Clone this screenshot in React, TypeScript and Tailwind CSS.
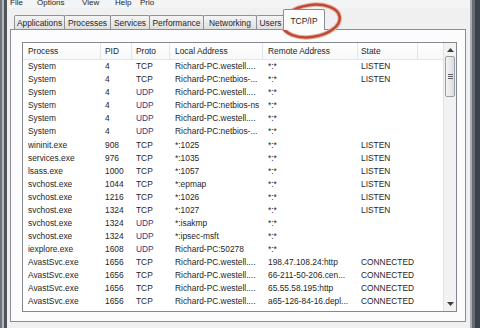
import React from 'react';

type Row = [string, string, string, string, string, string];

const ROWS: Row[] = [
  ['System', '4', 'TCP', 'Richard-PC.westell....', '*:*', 'LISTEN'],
  ['System', '4', 'TCP', 'Richard-PC:netbios-...', '*:*', 'LISTEN'],
  ['System', '4', 'UDP', 'Richard-PC.westell....', '*:*', ''],
  ['System', '4', 'UDP', 'Richard-PC:netbios-ns', '*:*', ''],
  ['System', '4', 'UDP', 'Richard-PC.westell....', '*:*', ''],
  ['System', '4', 'UDP', 'Richard-PC:netbios-...', '*:*', ''],
  ['wininit.exe', '908', 'TCP', '*:1025', '*:*', 'LISTEN'],
  ['services.exe', '976', 'TCP', '*:1035', '*:*', 'LISTEN'],
  ['lsass.exe', '1000', 'TCP', '*:1057', '*:*', 'LISTEN'],
  ['svchost.exe', '1044', 'TCP', '*:epmap', '*:*', 'LISTEN'],
  ['svchost.exe', '1216', 'TCP', '*:1026', '*:*', 'LISTEN'],
  ['svchost.exe', '1324', 'TCP', '*:1027', '*:*', 'LISTEN'],
  ['svchost.exe', '1324', 'UDP', '*:isakmp', '*:*', ''],
  ['svchost.exe', '1324', 'UDP', '*:ipsec-msft', '*:*', ''],
  ['iexplore.exe', '1608', 'UDP', 'Richard-PC:50278', '*:*', ''],
  ['AvastSvc.exe', '1656', 'TCP', 'Richard-PC.westell....', '198.47.108.24:http', 'CONNECTED'],
  ['AvastSvc.exe', '1656', 'TCP', 'Richard-PC.westell....', '66-211-50-206.cen...', 'CONNECTED'],
  ['AvastSvc.exe', '1656', 'TCP', 'Richard-PC.westell....', '65.55.58.195:http', 'CONNECTED'],
  ['AvastSvc.exe', '1656', 'TCP', 'Richard-PC.westell....', 'a65-126-84-16.depl...', 'CONNECTED'],
];

const TABS = [
  { label: 'Applications', w: 'w-[51px]' },
  { label: 'Processes', w: 'w-[47px]' },
  { label: 'Services', w: 'w-[40px]' },
  { label: 'Performance', w: 'w-[55px]' },
  { label: 'Networking', w: 'w-[54px]' },
  { label: 'Users', w: 'w-[29px]' },
];

// column widths: Process, PID, Proto, Local, Remote, State
const COLS = ['w-[78px] pl-[5px]', 'w-[31px] pl-[4px]', 'w-[38px] pl-[4px]', 'w-[93px] pl-[5px]', 'w-[95px] pl-[5px]', 'w-[60px] pl-[3px]'];
const HEADERS = ['Process', 'PID', 'Proto', 'Local Address', 'Remote Address', 'State'];

function ListView() {
  return (
    <div className="flex h-[270px] w-[435px] border border-[#828790] bg-white">
      <div className="flex-1 flex flex-col overflow-hidden">
        {/* column headers */}
        <div className="flex h-[17px] shrink-0 items-center border-b border-[#e3e6ea] bg-gradient-to-b from-white to-[#f7f8f9]">
          {HEADERS.map((h, i) => (
            <div key={h} className={`${COLS[i]} h-full flex items-center border-r border-[#e3e5e8] whitespace-nowrap`}>
              {h}
            </div>
          ))}
          <div className="flex-1" />
        </div>
        {ROWS.map((r, idx) => (
          <div key={idx} className="flex h-[13.05px] shrink-0 items-center whitespace-nowrap">
            {r.map((c, i) => (
              <div
                key={i}
                className={`${COLS[i]} overflow-hidden ${i === 2 && c === 'UDP' ? 'text-[#2d3a86]' : ''}`}
              >
                {c}
              </div>
            ))}
          </div>
        ))}
      </div>
      {/* vertical scrollbar */}
      <div className="w-[13px] flex flex-col bg-[#f2f2f2] border-l border-[#e2e2e2]">
        <div className="h-[13px] flex items-center justify-center">
          <svg width="7" height="4" viewBox="0 0 7 4"><path d="M0 4 L3.5 0 L7 4 Z" fill="#404040" /></svg>
        </div>
        <div className="h-[41px] mx-[1px] rounded-[2px] border border-[#979ea6] bg-gradient-to-r from-[#f4f4f4] to-[#dcdde0] flex flex-col items-center justify-center gap-[1px]">
          <div className="w-[5px] h-px bg-[#5c6066]" />
          <div className="w-[5px] h-px bg-[#5c6066]" />
          <div className="w-[5px] h-px bg-[#5c6066]" />
        </div>
        <div className="flex-1" />
        <div className="h-[14px] flex items-center justify-center">
          <svg width="7" height="4" viewBox="0 0 7 4"><path d="M0 0 L3.5 4 L7 0 Z" fill="#404040" /></svg>
        </div>
      </div>
    </div>
  );
}

export default function App() {
  return (
    <div
      className="relative w-[480px] h-[328px] overflow-hidden flex bg-[#f0f0f0] text-[8.4px] text-[#262626]"
      style={{ fontFamily: '"Liberation Sans", Arial, sans-serif' }}
    >
      {/* left window frame */}
      <div className="flex shrink-0">
        <div className="w-[2px] bg-[#6e7279]" />
        <div className="w-[2px] bg-[#b4b7bc]" />
        <div className="w-[3px] bg-[#4f535b]" />
      </div>

      <div className="w-[463px] flex flex-col">
        {/* menu bar (cut at top in the capture) */}
        <div className="h-[8px] overflow-hidden bg-[#f3f4f6] text-[8px]">
          <div className="flex mt-[-3px] leading-[12px] pl-[3px]">
            <span className="w-[27px]">File</span>
            <span className="w-[45px]">Options</span>
            <span className="w-[33px]">View</span>
            <span className="w-[25px]">Help</span>
            <span>Prio</span>
          </div>
        </div>

        {/* tab strip */}
        <div className="h-[21px] flex items-end pl-[7px] relative z-10">
          {TABS.map((t, i) => (
            <div
              key={t.label}
              className={`${t.w} h-[14px] ${i === 0 ? '' : '-ml-px'} border border-b-0 border-[#8e9196] rounded-t-[2px] bg-gradient-to-b from-[#f4f4f4] to-[#dfdfdf] flex items-center justify-center pt-px whitespace-nowrap`}
            >
              {t.label}
            </div>
          ))}
          <div className="w-[42px] h-[21px] -ml-[2px] mb-[-1px] border border-b-0 border-[#898c95] rounded-t-[2px] bg-[#fcfcfc] flex justify-center pt-[5px] whitespace-nowrap">
            TCP/IP
          </div>
        </div>

        {/* tab panel */}
        <div className="ml-[3px] w-[456px] h-[293px] border border-[#898c95] bg-[#fcfcfc] pt-[12px] pl-[11px]">
          <ListView />
        </div>
      </div>

      {/* right window frame */}
      <div className="flex shrink-0">
        <div className="w-[2px] bg-[#a9acb1]" />
        <div className="w-[3px] bg-[#676b73]" />
        <div className="w-[5px] bg-[#3d4149]" />
      </div>

      {/* red highlight ring drawn over the TCP/IP tab */}
      <svg className="absolute left-0 top-0 pointer-events-none" width="480" height="60">
        <ellipse cx="311" cy="21" rx="29" ry="16" transform="rotate(-8 311 21)" fill="none" stroke="#e7b3a6" strokeWidth="4.5" />
        <ellipse cx="311" cy="21" rx="29" ry="16" transform="rotate(-8 311 21)" fill="none" stroke="#bf4a33" strokeWidth="2.5" />
      </svg>
    </div>
  );
}
